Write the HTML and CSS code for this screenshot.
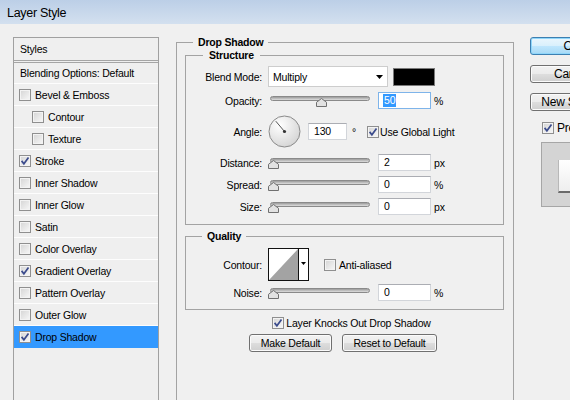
FILE: index.html
```html
<!DOCTYPE html>
<html>
<head>
<meta charset="utf-8">
<title>Layer Style</title>
<link rel="stylesheet" href="styles.css">
</head>
<body>
<div class="titlebar">Layer Style</div>
<div class="content">
  <div class="stylelist">
    <div class="li head">Styles</div>
    <div class="li blend">Blending Options: Default</div>
    <div class="li"><span class="cb"></span>Bevel &amp; Emboss</div>
    <div class="li sub"><span class="cb"></span>Contour</div>
    <div class="li sub"><span class="cb"></span>Texture</div>
    <div class="li"><span class="cb"><svg width="10" height="10" viewBox="0 0 10 10"><path d="M1.6 4.9 L3.9 7.8 L8.5 1.5" fill="none" stroke="#3b4b8c" stroke-width="1.7"/></svg></span>Stroke</div>
    <div class="li"><span class="cb"></span>Inner Shadow</div>
    <div class="li"><span class="cb"></span>Inner Glow</div>
    <div class="li"><span class="cb"></span>Satin</div>
    <div class="li"><span class="cb"></span>Color Overlay</div>
    <div class="li"><span class="cb"><svg width="10" height="10" viewBox="0 0 10 10"><path d="M1.6 4.9 L3.9 7.8 L8.5 1.5" fill="none" stroke="#3b4b8c" stroke-width="1.7"/></svg></span>Gradient Overlay</div>
    <div class="li"><span class="cb"></span>Pattern Overlay</div>
    <div class="li"><span class="cb"></span>Outer Glow</div>
    <div class="li on"><span class="cb"><svg width="10" height="10" viewBox="0 0 10 10"><path d="M1.6 4.9 L3.9 7.8 L8.5 1.5" fill="none" stroke="#3b4b8c" stroke-width="1.7"/></svg></span>Drop Shadow</div>
  </div>

  <fieldset class="group outer">
    <legend>Drop Shadow</legend>
    <fieldset class="group structure">
      <legend>Structure</legend>
      <div class="row r-blend">
        <span class="lbl">Blend Mode:</span>
        <div class="select">Multiply<svg class="arrow" width="7" height="4" viewBox="0 0 7 4"><path d="M0 0 H7 L3.5 4 Z" fill="#000"/></svg></div>
        <div class="swatch"></div>
      </div>
      <div class="row r-std r-opacity">
        <span class="lbl">Opacity:</span>
        <div class="slider"><div class="track"></div><svg class="thumb" style="left:46px" width="11" height="9" viewBox="0 0 11 9"><path d="M0.5 8.5 V4.3 L5.5 0.5 L10.5 4.3 V8.5 Z" fill="#e2e2e2" stroke="#707070"/></svg></div>
        <div class="field focus"><span class="sel">50</span></div>
        <span class="unit">%</span>
      </div>
      <div class="row r-angle">
        <span class="lbl">Angle:</span>
        <svg class="dial" width="33" height="33" viewBox="0 0 33 33"><defs><radialGradient id="dg" cx="0.35" cy="0.3" r="0.85"><stop offset="0" stop-color="#ffffff"/><stop offset="1" stop-color="#cfcfcf"/></radialGradient></defs><circle cx="16.5" cy="16.5" r="15.5" fill="url(#dg)" stroke="#8a8a8a"/><line x1="16.5" y1="16.5" x2="7.8" y2="6.2" stroke="#555" stroke-width="1"/><circle cx="16.5" cy="16.5" r="1.6" fill="#333"/></svg>
        <div class="field angle">130</div>
        <span class="deg">°</span>
        <span class="cb gl"><svg width="10" height="10" viewBox="0 0 10 10"><path d="M1.6 4.9 L3.9 7.8 L8.5 1.5" fill="none" stroke="#3b4b8c" stroke-width="1.7"/></svg></span>
        <span>Use Global Light</span>
      </div>
      <div class="row r-std">
        <span class="lbl">Distance:</span>
        <div class="slider"><div class="track"></div><svg class="thumb" style="left:-2px" width="11" height="9" viewBox="0 0 11 9"><path d="M0.5 8.5 V4.3 L5.5 0.5 L10.5 4.3 V8.5 Z" fill="#e2e2e2" stroke="#707070"/></svg></div>
        <div class="field">2</div>
        <span class="unit">px</span>
      </div>
      <div class="row r-std">
        <span class="lbl">Spread:</span>
        <div class="slider"><div class="track"></div><svg class="thumb" style="left:-2px" width="11" height="9" viewBox="0 0 11 9"><path d="M0.5 8.5 V4.3 L5.5 0.5 L10.5 4.3 V8.5 Z" fill="#e2e2e2" stroke="#707070"/></svg></div>
        <div class="field">0</div>
        <span class="unit">%</span>
      </div>
      <div class="row r-std last">
        <span class="lbl">Size:</span>
        <div class="slider"><div class="track"></div><svg class="thumb" style="left:-2px" width="11" height="9" viewBox="0 0 11 9"><path d="M0.5 8.5 V4.3 L5.5 0.5 L10.5 4.3 V8.5 Z" fill="#e2e2e2" stroke="#707070"/></svg></div>
        <div class="field">0</div>
        <span class="unit">px</span>
      </div>
    </fieldset>

    <fieldset class="group quality">
      <legend>Quality</legend>
      <div class="row r-contour">
        <span class="lbl">Contour:</span>
        <svg class="contour" width="41" height="33" viewBox="0 0 41 33"><rect x="0.5" y="0.5" width="40" height="32" fill="#fff" stroke="#111"/><polygon points="1,32 30,1 30,32" fill="#a3a3a3"/><line x1="30.5" y1="0" x2="30.5" y2="33" stroke="#111"/><path d="M33 14 H38 L35.5 17 Z" fill="#000"/></svg>
        <span class="cb aa"></span>
        <span>Anti-aliased</span>
      </div>
      <div class="row r-std last">
        <span class="lbl">Noise:</span>
        <div class="slider"><div class="track"></div><svg class="thumb" style="left:-2px" width="11" height="9" viewBox="0 0 11 9"><path d="M0.5 8.5 V4.3 L5.5 0.5 L10.5 4.3 V8.5 Z" fill="#e2e2e2" stroke="#707070"/></svg></div>
        <div class="field">0</div>
        <span class="unit">%</span>
      </div>
    </fieldset>

    <div class="knock">
      <span class="cb"><svg width="10" height="10" viewBox="0 0 10 10"><path d="M1.6 4.9 L3.9 7.8 L8.5 1.5" fill="none" stroke="#3b4b8c" stroke-width="1.7"/></svg></span>
      <span>Layer Knocks Out Drop Shadow</span>
    </div>
    <div class="defaults">
      <div class="btn w-make">Make Default</div>
      <div class="btn w-reset">Reset to Default</div>
    </div>
  </fieldset>

  <div class="side">
    <div class="btn big default">OK</div>
    <div class="btn big">Cancel</div>
    <div class="btn big">New Style...</div>
    <div class="preview-row">
      <span class="cb"><svg width="10" height="10" viewBox="0 0 10 10"><path d="M1.6 4.9 L3.9 7.8 L8.5 1.5" fill="none" stroke="#3b4b8c" stroke-width="1.7"/></svg></span>
      <span>Preview</span>
    </div>
    <div class="preview-box"><div class="preview-swatch"></div></div>
  </div>
</div>
</body>
</html>
```

FILE: styles.css
```css
* { box-sizing: border-box; }
html, body { margin: 0; padding: 0; }
body {
  width: 570px;
  height: 400px;
  overflow: hidden;
  background: #f0f0f0;
  font-family: "Liberation Sans", Arial, sans-serif;
  font-size: 10.5px;
  letter-spacing: -0.2px;
  color: #000;
}

.titlebar {
  height: 24px;
  padding: 3px 0 0 7px;
  line-height: 21px;
  font-size: 12.5px;
  letter-spacing: -0.3px;
  background: linear-gradient(#bccfe7, #d3e0ef);
  color: #000;
}

.content {
  display: flex;
  align-items: flex-start;
  padding: 13px 0 0 13px;
}

/* left style list */
.stylelist {
  flex: none;
  width: 146px;
  height: 380px;
  border: 1px solid #a0a0a0;
  background: #efefef;
}
.li {
  height: 22px;
  display: flex;
  align-items: center;
  padding-left: 5px;
  border-bottom: 1px solid #fdfdfd;
  white-space: nowrap;
}
.li.head { height: 25px; padding-left: 6px; border-bottom: 3px double #a5a5a5; }
.li.blend { height: 21px; padding-left: 6px; }
.li.sub { padding-left: 18px; }
.li.on { background: #3399ff; border-bottom-color: #3399ff; }

.cb {
  flex: none;
  width: 12px;
  height: 12px;
  margin-right: 4px;
  border: 1px solid #8f8f8f;
  background: linear-gradient(135deg, #d4d4d4, #f8f8f8);
  box-shadow: inset 0 0 0 1px #f3f3f3;
  display: inline-flex;
  align-items: center;
  justify-content: center;
}
.cb svg { display: block; }

/* group boxes */
fieldset.group {
  min-width: 0;
  border: 1px solid #a3a3a3;
}
fieldset.group > legend {
  font-weight: bold;
  line-height: 14px;
}
fieldset.outer {
  flex: none;
  width: 338px;
  height: 400px;
  margin: -2px 0 0 17px;
  padding: 0 9px 0 8px;
}
fieldset.outer > legend { margin-left: 8px; padding: 0 5px; }
fieldset.structure {
  margin: -1px 0 0 0;
  padding: 4px 0 9px 0;
}
fieldset.structure > legend { margin-left: 17px; padding: 0 6px; }
fieldset.quality {
  margin: 4px 0 0 0;
  padding: 5px 0 8px 0;
}
fieldset.quality > legend { margin-left: 16px; padding: 0 5px; }

.row {
  display: flex;
  align-items: center;
  white-space: nowrap;
}
.lbl {
  flex: none;
  width: 76px;
  margin-right: 6px;
  text-align: right;
}
.r-blend { height: 21px; margin-bottom: 5px; }
.r-std { height: 17px; margin-bottom: 5px; }
.r-opacity { margin-bottom: 6px; }
.r-angle { height: 33px; margin-bottom: 6px; }
.r-contour { height: 33px; margin-bottom: 3px; }
.row.last { margin-bottom: 0; }

.select {
  flex: none;
  width: 120px;
  height: 21px;
  padding: 0 4px;
  display: flex;
  align-items: center;
  justify-content: space-between;
  background: #fff;
  border: 1px solid #cdcdcd;
}
.swatch {
  flex: none;
  width: 42px;
  height: 18px;
  margin-left: 5px;
  background: #000;
  border: 1px solid #7a7a7a;
}

.slider {
  position: relative;
  flex: none;
  width: 100px;
  height: 17px;
  margin-left: 2px;
}
.track {
  height: 5px;
  margin-top: 4px;
  border: 1px solid #8a8a8a;
  border-radius: 3px;
  background: linear-gradient(#9a9a9a, #c4c4c4 60%, #dedede);
}
.thumb {
  position: absolute;
  top: 6px;
  display: block;
}

.field {
  flex: none;
  width: 53px;
  height: 17px;
  margin-left: 8px;
  padding-left: 5px;
  line-height: 15px;
  background: #fff;
  border: 1px solid #d2d5da;
  border-top-color: #abadb3;
}
.field.focus { border-color: #7eb4ea; padding-left: 4px; }
.sel {
  display: inline-block;
  padding: 0 1px;
  line-height: 13px;
  background: #3399ff;
  color: #fff;
}
.unit { margin-left: 3px; }

.dial { flex: none; display: block; }
.field.angle { width: 39px; margin-left: 7px; }
.deg { margin-left: 5px; width: 5px; }
.cb.gl { margin-left: 10px; margin-right: 1px; }

.contour { flex: none; display: block; }
.cb.aa { margin-left: 15px; margin-right: 3px; }

.knock {
  height: 13px;
  margin-top: 6px;
  padding-left: 14px;
  display: flex;
  align-items: center;
  justify-content: center;
  white-space: nowrap;
}
.knock .cb { margin-right: 2px; }

.defaults {
  margin-top: 5px;
  display: flex;
  justify-content: center;
  gap: 10px;
  padding-right: 3px;
}

.btn {
  flex: none;
  height: 18px;
  display: flex;
  align-items: center;
  justify-content: center;
  white-space: nowrap;
  border: 1px solid #707070;
  border-radius: 3px;
  background: linear-gradient(#f2f2f2 0%, #ebebeb 48%, #dddddd 52%, #cfcfcf 100%);
  box-shadow: inset 0 0 0 1px #fbfbfb;
}
.w-make { width: 83px; }
.w-reset { width: 95px; }

.side {
  flex: none;
  width: 100px;
  margin-left: 16px;
  display: flex;
  flex-direction: column;
  align-items: flex-start;
  font-size: 12px;
}
.btn.big { width: 84px; margin-bottom: 10px; }
.btn.default {
  border-color: #3c7fb1;
  background: linear-gradient(#eaf6fd 0%, #d9f0fc 48%, #bee6fd 52%, #a7d9f5 100%);
  box-shadow: inset 0 0 0 1px #8fd6fa;
}
.preview-row {
  height: 13px;
  margin-left: 12px;
  display: flex;
  align-items: center;
}
.preview-row .cb { margin-right: 3px; }
.preview-box {
  margin: 8px 0 0 11px;
  width: 70px;
  height: 65px;
  padding: 17px 0 0 16px;
  background: #d4d4d4;
  border: 1px solid #a6a6a6;
}
.preview-swatch {
  width: 36px;
  height: 33px;
  background: linear-gradient(#ffffff, #eeeeee);
  border-left: 1px solid #b8b8b8;
  border-bottom: 2px solid #6a6a6a;
}
```
